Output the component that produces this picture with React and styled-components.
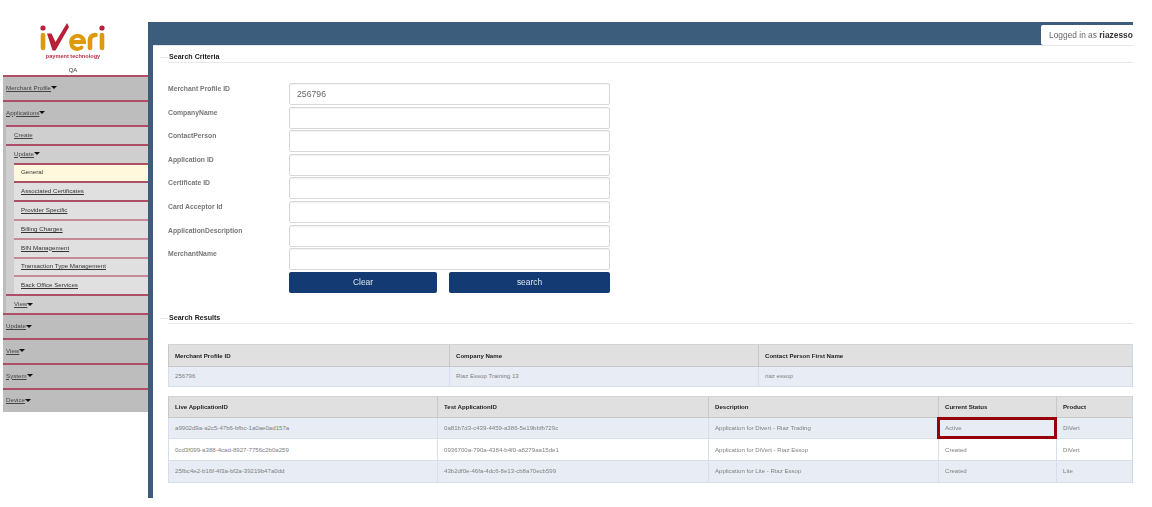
import React from "react";
import styled, { createGlobalStyle } from "styled-components";

const Global = createGlobalStyle`
  html, body { margin: 0; padding: 0; background: #fff; }
  body { font-family: "Liberation Sans", Arial, sans-serif; overflow: hidden; }
`;
const Page = styled.div`
  width: 1152px; height: 507px; box-sizing: border-box;
  padding: 22px 19px 9px 3px;
  display: flex; overflow: hidden;
  filter: blur(0.45px);
`;
const Sidebar = styled.aside`width: 145px; flex: none; display: flex; flex-direction: column;`;
const LogoBox = styled.div`height: 53px; padding-right: 5px; display: flex; flex-direction: column; align-items: center; color: #222;`;
const Tagline = styled.div`font-size: 5.6px; line-height: 6px; color: #b5334a; font-weight: 700; margin-top: 1px; white-space: nowrap;`;
const QA = styled.div`font-size: 6px; line-height: 7px; color: #333; margin-top: 8px;`;
const Menu = styled.nav`display: flex; flex-direction: column;`;
const TopItem = styled.div`
  height: 24.8px; box-sizing: border-box; border-top: 2px solid #ad4f66; background: #bdbdbd; padding-bottom: 2px;
  display: flex; align-items: center; padding-left: 3px; font-size: 6.2px; color: #444;
`;
const SubGroup = styled.div`background: #bdbdbd; padding-left: 3px;`;
const SubItem = styled.div`
  height: 19px; box-sizing: border-box; border-top: 2px solid #ad4f66; background: #cfcfcf; padding-bottom: 2px;
  display: flex; align-items: center; padding-left: 8px; font-size: 6.2px; color: #444;
`;
const SubSubGroup = styled.div`background: #cfcfcf; padding-left: 8px;`;
const Leaf = styled.div`
  height: 18.8px; box-sizing: border-box; border-top: 2px solid ${p => p.$light ? "#c48a98" : "#ad4f66"}; padding-bottom: 2px;
  background: ${p => p.$active ? "#fff8dc" : "#e0e0e0"};
  display: flex; align-items: center; padding-left: 7px; font-size: 6.2px; color: #333;
`;
const Label = styled.span`text-decoration: underline;`;
const Caret = styled.span`
  display: inline-block; width: 0; height: 0; margin-top: 1px;
  border-left: 3px solid transparent; border-right: 3px solid transparent; border-top: 3px solid #111;
`;
const Content = styled.main`
  flex: 1; display: flex; flex-direction: column;
  border-left: 5px solid #3c5d7b; min-width: 0;
`;
const TopBar = styled.header`height: 23px; flex: none; background: #3c5d7b; display: flex; justify-content: flex-end;`;
const Logged = styled.div`
  width: 92px; height: 20px; margin-top: 3px; box-sizing: border-box; background: #fff;
  border-radius: 2px 0 0 2px; font-size: 8.4px; line-height: 20px; padding-left: 8px; color: #666;
  white-space: nowrap; b { color: #333; }
`;
const Main = styled.div`flex: 1; padding-left: 15px; display: flex; flex-direction: column; border-top: 1px solid #e3e7eb;`;
const Legend = styled.div`
  position: relative; height: 17px; box-sizing: border-box; border-bottom: 1px solid #e8e8e8;
  font-size: 7.1px; font-weight: 700; color: #222; line-height: 9px; padding: 7px 0 0 1px;
  &::before { content: ""; position: absolute; left: -8px; top: 11px; width: 8px; height: 1px; background: #e8e8e8; }
`;
const Form = styled.div`
  display: grid; grid-template-columns: 121px 321px; row-gap: 1.6px; margin-top: 20px;
  grid-auto-rows: 22px;
`;
const FieldLabel = styled.label`font-size: 6.8px; font-weight: 700; color: #777; line-height: 10px; padding-top: 1px;`;
const Input = styled.input`
  width: 100%; height: 22px; box-sizing: border-box; border: 1px solid #d8d8d8; border-radius: 2px;
  font: 8.7px "Liberation Sans", Arial, sans-serif; color: #666; padding: 0 7px 1px; background: #fff;
  box-shadow: inset 0 1px 1px rgba(0,0,0,.06);
`;
const Buttons = styled.div`grid-column: 2; display: grid; grid-template-columns: 148px 161px; column-gap: 12px;`;
const Btn = styled.button`
  height: 21px; background: #133a72; color: #dfe6f0; border: 0; border-radius: 2px; padding: 0;
  font: 8.4px "Liberation Sans", Arial, sans-serif;
`;
const ResultsLegend = styled(Legend)`margin-top: 13px;`;
const Table = styled.table`
  width: 964px; border-collapse: collapse; table-layout: fixed; margin-top: ${p => p.$mt}px;
  border-bottom: 1px solid #cdd8e6; border-right: 1px solid #cdd8e6;
`;
const Th = styled.th`
  height: ${p => p.$h}px; background: #e0e0e0; color: #222; text-align: left; padding: 0 0 0 6px; font-size: 6.1px; font-weight: 700;
  border-left: 1px solid #c8c8c8; border-top: 1px solid #d4d4d4; border-bottom: 1px solid #c8c8c8;
`;
const Td = styled.td`
  height: ${p => p.$h}px; padding: 0 0 1px 6px; box-sizing: border-box; color: #808080; font-size: 6.1px; white-space: nowrap; position: relative;
  background: ${p => p.$plain ? "#fff" : "#e8edf5"};
  border-left: 1px solid #d5deea; border-bottom: 1px solid #d5deea;
`;
const Highlight = styled.span`
  position: absolute; left: -2px; top: -1px; right: -1px; bottom: -1px; border: 3px solid #980009; pointer-events: none;
`;

const Logo = () => (
  <svg width="66" height="30" viewBox="0 0 66 30" fill="none" aria-label="iVeri logo">
    <circle cx="3" cy="6" r="2.6" fill="#b8203a" />
    <path d="M3 13V26" stroke="#dd9a0c" strokeWidth="4.6" strokeLinecap="round" />
    <path d="M7 11.500H11.500L15.500 20L27 1L29 5L15.500 28.500H12.500Z" fill="#b8203a" />
    <path d="M31.500 20H44A6.500 6.500 0 1 0 41.500 25.500" stroke="#dd9a0c" strokeWidth="4" strokeLinecap="round" />
    <path d="M50 26V18C50 15 52 13 55.500 13" stroke="#dd9a0c" strokeWidth="4.600" strokeLinecap="round" />
    <circle cx="62" cy="6" r="2.600" fill="#b8203a" />
    <path d="M62 13V26" stroke="#dd9a0c" strokeWidth="4.600" strokeLinecap="round" />
  </svg>
);

const Top = ({ children }) => <TopItem><Label>{children}</Label><Caret /></TopItem>;
const leaves = ["Associated Certificates", "Provider Specific", "Billing Charges", "BIN Management", "Transaction Type Management", "Back Office Services"];
const fields = ["CompanyName", "ContactPerson", "Application ID", "Certificate ID", "Card Acceptor Id", "ApplicationDescription", "MerchantName"];
const apps = [
  ["a9902d9a-a2c5-47b6-bfbc-1a0ae0ad157a", "0a81b7d3-c439-4459-a386-5e19bbfb729c", "Application for Divert - Riaz Trading", "Active", "DiVert"],
  ["0cd3f099-a388-4cad-8927-7756c2b0a259", "0936700a-790a-4384-b4f0-a8279aa15de1", "Application for DiVert - Riaz Essop", "Created", "DiVert"],
  ["25fbc4e2-b16f-4f3a-bf2a-39219b47a0dd", "43b2df0e-46fa-4dc6-8e13-cb8a70ecb599", "Application for Lite - Riaz Essop", "Created", "Lite"],
];

export default function App() {
  return (
    <Page>
      <Global />
      <Sidebar>
        <LogoBox>
          <Logo />
          <Tagline>payment technology</Tagline>
          <QA>QA</QA>
        </LogoBox>
        <Menu>
          <Top>Merchant Profile</Top>
          <Top>Applications</Top>
          <SubGroup>
            <SubItem><Label>Create</Label></SubItem>
            <SubItem><Label>Update</Label><Caret /></SubItem>
            <SubSubGroup>
              <Leaf $active>General</Leaf>
              {leaves.map((l, i) => <Leaf key={l} $light={i > 1}><Label>{l}</Label></Leaf>)}
            </SubSubGroup>
            <SubItem><Label>View</Label><Caret /></SubItem>
          </SubGroup>
          <Top>Update</Top>
          <Top>View</Top>
          <Top>System</Top>
          <Top>Device</Top>
        </Menu>
      </Sidebar>
      <Content>
        <TopBar>
          <Logged>Logged in as <b>riazesso</b></Logged>
        </TopBar>
        <Main>
          <Legend>Search Criteria</Legend>
          <Form>
            <FieldLabel>Merchant Profile ID</FieldLabel>
            <Input defaultValue="256796" />
            {fields.map(f => (
              <React.Fragment key={f}>
                <FieldLabel>{f}</FieldLabel>
                <Input />
              </React.Fragment>
            ))}
            <Buttons>
              <Btn>Clear</Btn>
              <Btn>search</Btn>
            </Buttons>
          </Form>
          <ResultsLegend>Search Results</ResultsLegend>
          <Table $mt={20}>
            <colgroup><col width="281" /><col width="309" /><col width="374" /></colgroup>
            <thead><tr>
              <Th $h={21}>Merchant Profile ID</Th><Th $h={21}>Company Name</Th><Th $h={21}>Contact Person First Name</Th>
            </tr></thead>
            <tbody><tr>
              <Td $h={20}>256796</Td><Td $h={20}>Riaz Essop Training 13</Td><Td $h={20}>riaz essop</Td>
            </tr></tbody>
          </Table>
          <Table $mt={9}>
            <colgroup><col width="269" /><col width="271" /><col width="230" /><col width="118" /><col width="76" /></colgroup>
            <thead><tr>
              {["Live ApplicationID", "Test ApplicationID", "Description", "Current Status", "Product"].map(h => <Th key={h} $h={20}>{h}</Th>)}
            </tr></thead>
            <tbody>
              {apps.map((r, i) => (
                <tr key={r[0]}>
                  {r.map((c, j) => (
                    <Td key={j} $h={21.6} $plain={i === 1}>
                      {c}
                      {i === 0 && j === 3 && <Highlight />}
                    </Td>
                  ))}
                </tr>
              ))}
            </tbody>
          </Table>
        </Main>
      </Content>
    </Page>
  );
}
